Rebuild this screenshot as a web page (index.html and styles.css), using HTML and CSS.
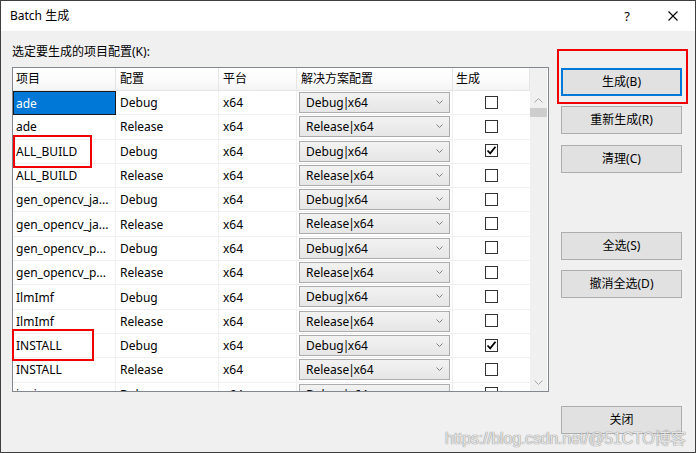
FILE: index.html
```html
<!DOCTYPE html>
<html>
<head>
<meta charset="utf-8">
<link rel="stylesheet" href="styles.css">
</head>
<body>
<div class="window">
  <div class="titlebar">
    <div class="title">Batch 生成</div>
    <div class="help">?</div>
    <svg class="close" width="10" height="10" viewBox="0 0 10 10"><path d="M0.5 0.5 L9.5 9.5 M9.5 0.5 L0.5 9.5" stroke="#000" stroke-width="1.1" fill="none"/></svg>
  </div>
  <div class="content">
    <div class="left">
      <div class="label">选定要生成的项目配置(K):</div>
      <div class="listbox">
        <div class="list">
          <div class="row head">
            <div class="cell">项目</div>
            <div class="cell">配置</div>
            <div class="cell">平台</div>
            <div class="cell">解决方案配置</div>
            <div class="cell">生成</div>
          </div>
          <div class="rows">
            <div class="row"><div class="cell sel">ade</div><div class="cell">Debug</div><div class="cell">x64</div><div class="cell cc"><div class="combo"><span>Debug<span class="pipe">|</span>x64</span><svg width="7" height="4" viewBox="0 0 7 4"><path d="M0.5 0.5 L3.5 3.5 L6.5 0.5" stroke="#808080" fill="none"/></svg></div></div><div class="cell ck"><span class="cb"></span></div></div>
            <div class="row"><div class="cell">ade</div><div class="cell">Release</div><div class="cell">x64</div><div class="cell cc"><div class="combo"><span>Release<span class="pipe">|</span>x64</span><svg width="7" height="4" viewBox="0 0 7 4"><path d="M0.5 0.5 L3.5 3.5 L6.5 0.5" stroke="#808080" fill="none"/></svg></div></div><div class="cell ck"><span class="cb"></span></div></div>
            <div class="row"><div class="cell">ALL_BUILD</div><div class="cell">Debug</div><div class="cell">x64</div><div class="cell cc"><div class="combo"><span>Debug<span class="pipe">|</span>x64</span><svg width="7" height="4" viewBox="0 0 7 4"><path d="M0.5 0.5 L3.5 3.5 L6.5 0.5" stroke="#808080" fill="none"/></svg></div></div><div class="cell ck"><span class="cb"><svg width="11" height="11" viewBox="0 0 11 11"><path d="M1.5 5.5 L4.2 8.3 L9.5 1.8" stroke="#000" stroke-width="1.8" fill="none"/></svg></span></div></div>
            <div class="row"><div class="cell">ALL_BUILD</div><div class="cell">Release</div><div class="cell">x64</div><div class="cell cc"><div class="combo"><span>Release<span class="pipe">|</span>x64</span><svg width="7" height="4" viewBox="0 0 7 4"><path d="M0.5 0.5 L3.5 3.5 L6.5 0.5" stroke="#808080" fill="none"/></svg></div></div><div class="cell ck"><span class="cb"></span></div></div>
            <div class="row"><div class="cell">gen_opencv_ja...</div><div class="cell">Debug</div><div class="cell">x64</div><div class="cell cc"><div class="combo"><span>Debug<span class="pipe">|</span>x64</span><svg width="7" height="4" viewBox="0 0 7 4"><path d="M0.5 0.5 L3.5 3.5 L6.5 0.5" stroke="#808080" fill="none"/></svg></div></div><div class="cell ck"><span class="cb"></span></div></div>
            <div class="row"><div class="cell">gen_opencv_ja...</div><div class="cell">Release</div><div class="cell">x64</div><div class="cell cc"><div class="combo"><span>Release<span class="pipe">|</span>x64</span><svg width="7" height="4" viewBox="0 0 7 4"><path d="M0.5 0.5 L3.5 3.5 L6.5 0.5" stroke="#808080" fill="none"/></svg></div></div><div class="cell ck"><span class="cb"></span></div></div>
            <div class="row"><div class="cell">gen_opencv_p...</div><div class="cell">Debug</div><div class="cell">x64</div><div class="cell cc"><div class="combo"><span>Debug<span class="pipe">|</span>x64</span><svg width="7" height="4" viewBox="0 0 7 4"><path d="M0.5 0.5 L3.5 3.5 L6.5 0.5" stroke="#808080" fill="none"/></svg></div></div><div class="cell ck"><span class="cb"></span></div></div>
            <div class="row"><div class="cell">gen_opencv_p...</div><div class="cell">Release</div><div class="cell">x64</div><div class="cell cc"><div class="combo"><span>Release<span class="pipe">|</span>x64</span><svg width="7" height="4" viewBox="0 0 7 4"><path d="M0.5 0.5 L3.5 3.5 L6.5 0.5" stroke="#808080" fill="none"/></svg></div></div><div class="cell ck"><span class="cb"></span></div></div>
            <div class="row"><div class="cell">IlmImf</div><div class="cell">Debug</div><div class="cell">x64</div><div class="cell cc"><div class="combo"><span>Debug<span class="pipe">|</span>x64</span><svg width="7" height="4" viewBox="0 0 7 4"><path d="M0.5 0.5 L3.5 3.5 L6.5 0.5" stroke="#808080" fill="none"/></svg></div></div><div class="cell ck"><span class="cb"></span></div></div>
            <div class="row"><div class="cell">IlmImf</div><div class="cell">Release</div><div class="cell">x64</div><div class="cell cc"><div class="combo"><span>Release<span class="pipe">|</span>x64</span><svg width="7" height="4" viewBox="0 0 7 4"><path d="M0.5 0.5 L3.5 3.5 L6.5 0.5" stroke="#808080" fill="none"/></svg></div></div><div class="cell ck"><span class="cb"></span></div></div>
            <div class="row"><div class="cell">INSTALL</div><div class="cell">Debug</div><div class="cell">x64</div><div class="cell cc"><div class="combo"><span>Debug<span class="pipe">|</span>x64</span><svg width="7" height="4" viewBox="0 0 7 4"><path d="M0.5 0.5 L3.5 3.5 L6.5 0.5" stroke="#808080" fill="none"/></svg></div></div><div class="cell ck"><span class="cb"><svg width="11" height="11" viewBox="0 0 11 11"><path d="M1.5 5.5 L4.2 8.3 L9.5 1.8" stroke="#000" stroke-width="1.8" fill="none"/></svg></span></div></div>
            <div class="row"><div class="cell">INSTALL</div><div class="cell">Release</div><div class="cell">x64</div><div class="cell cc"><div class="combo"><span>Release<span class="pipe">|</span>x64</span><svg width="7" height="4" viewBox="0 0 7 4"><path d="M0.5 0.5 L3.5 3.5 L6.5 0.5" stroke="#808080" fill="none"/></svg></div></div><div class="cell ck"><span class="cb"></span></div></div>
            <div class="row"><div class="cell">ippiw</div><div class="cell">Debug</div><div class="cell">x64</div><div class="cell cc"><div class="combo"><span>Debug<span class="pipe">|</span>x64</span><svg width="7" height="4" viewBox="0 0 7 4"><path d="M0.5 0.5 L3.5 3.5 L6.5 0.5" stroke="#808080" fill="none"/></svg></div></div><div class="cell ck"><span class="cb"></span></div></div>
          </div>
        </div>
        <div class="scrollbar">
          <svg class="arrow" width="9" height="5" viewBox="0 0 9 5"><path d="M0.5 4.5 L4.5 0.5 L8.5 4.5" stroke="#a6a6a6" fill="none"/></svg>
          <div class="thumb"></div>
          <div class="track"></div>
          <svg class="arrow" width="9" height="5" viewBox="0 0 9 5"><path d="M0.5 0.5 L4.5 4.5 L8.5 0.5" stroke="#a6a6a6" fill="none"/></svg>
        </div>
      </div>
    </div>
    <div class="right">
      <div class="btn default">生成(B)</div>
      <div class="btn g10">重新生成(R)</div>
      <div class="btn g11">清理(C)</div>
      <div class="btn g59">全选(S)</div>
      <div class="btn g10">撤消全选(D)</div>
      <div class="btn g108">关闭</div>
    </div>
  </div>
  <div class="mark mark-a"></div>
  <div class="mark mark-b"></div>
  <div class="mark mark-c"></div>
  <div class="watermark">https://blog.csdn.net/@51CTO博客</div>
</div>
</body>
</html>
```

FILE: styles.css
```css
* { box-sizing: border-box; }
html, body { margin: 0; padding: 0; background: #fff; }
body {
  font-family: "Noto Sans", "Noto Sans CJK SC", sans-serif;
  font-size: 12px;
  color: #000;
}
.window {
  position: relative;
  width: 696px;
  height: 453px;
  border: 1px solid #3f3f3f;
  display: flex;
  flex-direction: column;
  overflow: hidden;
}
.titlebar {
  height: 30px;
  background: #fff;
  display: flex;
  align-items: center;
  padding-left: 9px;
  flex: none;
}
.title { flex: 1; line-height: 16px; padding-bottom: 1px; }
.help { font-size: 13px; margin-right: 38px; line-height: 16px; }
.close { margin-right: 17px; }
.content {
  flex: 1;
  background: #f0f0f0;
  display: flex;
}
.left {
  padding-left: 11px;
  padding-top: 13px;
  width: 548px;
  flex: none;
}
.label { line-height: 16px; height: 16px; margin-bottom: 7px; }
.listbox {
  width: 537px;
  height: 325px;
  border: 1px solid #828790;
  background: #fff;
  display: flex;
  overflow: hidden;
}
.list { width: 517px; flex: none; overflow: hidden; }
.row {
  display: grid;
  grid-template-columns: 103px 103px 78px 156px 77px;
  height: 24.3px;
  border-bottom: 1px solid #f0f0f0;
}
.row.head {
  height: 23px;
  background: linear-gradient(#fff, #fbfbfb 60%, #f4f4f4);
  border-bottom: 1px solid #e5e5e5;
}
.cell {
  display: flex;
  align-items: center;
  padding-left: 3px;
  padding-top: 1px;
  border-right: 1px solid #f0f0f0;
  white-space: nowrap;
  overflow: hidden;
  line-height: 16px;
}
.head .cell { padding-top: 0; }
.row .cell:nth-child(2), .row .cell:nth-child(3) { padding-left: 4px; }
.head .cell { border-right: 1px solid #e5e5e5; }
.head .cell:nth-child(4) { padding-left: 4px; }
.head .cell:nth-child(5) { padding-left: 3px; }
.cell.sel {
  background: #0078d7;
  color: #fff;
  border: 1px solid #1a1a1a;
  padding-left: 2px;
  margin-bottom: -1px;
}
.cell.cc { padding: 1px 2px 1px 2px; align-items: flex-start; }
.combo {
  width: 152px;
  height: 21px;
  border: 1px solid #acacac;
  background: linear-gradient(#f2f2f2, #e6e6e6);
  display: flex;
  align-items: center;
  justify-content: space-between;
  padding: 1px 6px 0 6px;
}
.pipe { margin: 0 -1.5px 0 -1px; }
.combo svg { margin-top: -2px; }
.cell.ck { justify-content: center; padding-left: 0; border-right: none; }
.cb {
  width: 13px;
  height: 13px;
  border: 1px solid #333;
  background: #fff;
  display: flex;
  align-items: center;
  justify-content: center;
  margin-top: -2px;
}
.scrollbar {
  width: 17px;
  flex: none;
  background: #f0f0f0;
  display: flex;
  flex-direction: column;
  align-items: center;
  padding-top: 30px;
  padding-bottom: 6px;
}
.thumb { width: 17px; height: 9px; background: #cdcdcd; margin-top: 5px; }
.track { flex: 1; }
.right {
  flex: 1;
  padding-left: 12px;
  padding-top: 37px;
  display: flex;
  flex-direction: column;
  align-items: flex-start;
}
.btn {
  width: 121px;
  height: 28px;
  border: 1px solid #adadad;
  background: #e1e1e1;
  display: flex;
  align-items: center;
  justify-content: center;
  line-height: 16px;
}
.btn.default { border: 2px solid #0078d7; }
.g10 { margin-top: 10px; }
.g11 { margin-top: 11px; }
.g59 { margin-top: 59px; }
.g108 { margin-top: 108px; }
.mark {
  position: absolute;
  border: 2px solid #f00000;
}
.mark-a { left: 12px; top: 134px; width: 79px; height: 33px; }
.mark-b { left: 11px; top: 328px; width: 82px; height: 32px; }
.mark-c { left: 556px; top: 48px; width: 131px; height: 55px; }
.watermark {
  position: absolute;
  left: 444px;
  top: 424px;
  font-family: "Liberation Sans", "Noto Sans CJK SC", sans-serif;
  font-size: 16px;
  letter-spacing: -0.2px;
  color: rgba(245, 245, 245, 0.85);
  text-shadow: 0 0 1px #8c8c8c, 0 0 1px #8c8c8c;
  white-space: nowrap;
}
```
